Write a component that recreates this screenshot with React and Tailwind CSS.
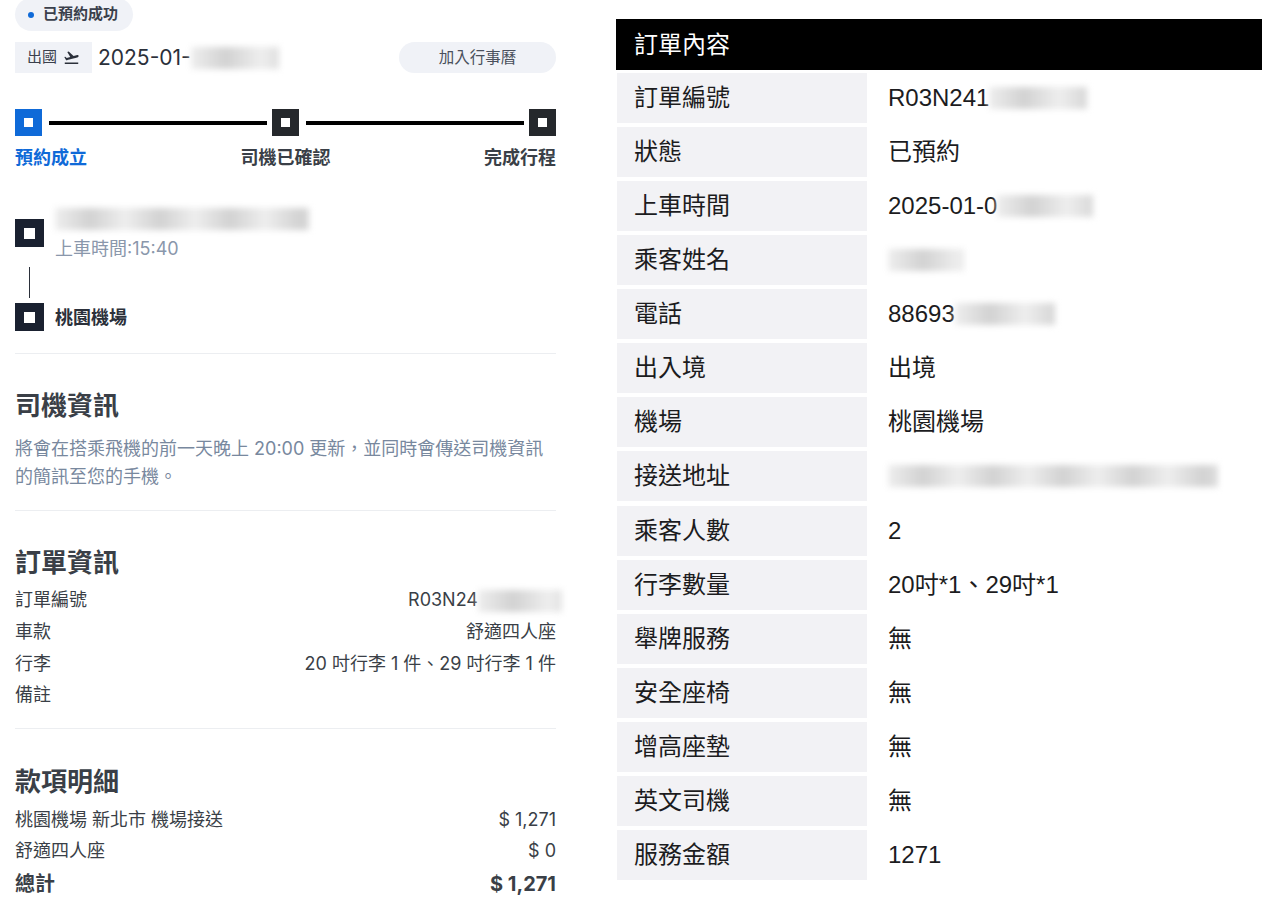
import React from 'react';
import { MdFlightTakeoff } from 'react-icons/md';

const leftFont = { fontFamily: 'Inter, "Noto Sans CJK TC", sans-serif' };
const rightFont = { fontFamily: '"Liberation Sans", "Noto Sans CJK TC", sans-serif' };

const orderRows = [
  ['訂單編號', 'R03N241', 98],
  ['狀態', '已預約'],
  ['上車時間', '2025-01-0', 96],
  ['乘客姓名', '', 76],
  ['電話', '88693', 100],
  ['出入境', '出境'],
  ['機場', '桃園機場'],
  ['接送地址', '', 330],
  ['乘客人數', '2'],
  ['行李數量', '20吋*1、29吋*1'],
  ['舉牌服務', '無'],
  ['安全座椅', '無'],
  ['增高座墊', '無'],
  ['英文司機', '無'],
  ['服務金額', '1271'],
];

// blurred out personal data
const Smudge = ({ width, className = '' }) => (
  <span
    className={`inline-block h-[22px] blur-[3px] align-middle bg-[repeating-linear-gradient(90deg,#eeeeee_0px,#d2d2d2_35px,#eeeeee_70px)] ${className}`}
    style={{ width }}
  />
);

const StepBox = ({ color }) => (
  <div className={`w-[27px] h-[27px] shrink-0 flex items-center justify-center ${color}`}>
    <div className="w-[9px] h-[9px] bg-white" />
  </div>
);

const RouteBox = () => (
  <div className="w-[29px] h-[28px] shrink-0 flex items-center justify-center bg-[#1a2130]">
    <div className="w-[11px] h-[11px] bg-white" />
  </div>
);

const Row = ({ label, children, className = 'h-[31.7px] text-[18px]' }) => (
  <div className={`flex items-center justify-between text-[#3a3f47] ${className}`}>
    <span>{label}</span>
    <span>{children}</span>
  </div>
);

const LeftColumn = () => (
  <div className="w-[541px] ml-[15px] shrink-0 -mt-[2px]" style={leftFont}>
    {/* Status pill */}
    <div className="w-[118px] h-[33px] rounded-full bg-[#f0f2f7] flex items-center pl-[13px] gap-[9px] text-[15px] font-semibold text-[#3a404c]">
      <span className="w-[6px] h-[6px] rounded-full bg-[#0f6ad8]" />
      <span className="whitespace-nowrap">已預約成功</span>
    </div>

    {/* Trip date */}
    <div className="flex items-center mt-[11px] h-[31px]">
      <div className="w-[77px] h-full bg-[#f0f2f7] flex items-center pl-[12px] gap-[6px] text-[15px] text-[#3a404c]">
        <span>出國</span>
        <MdFlightTakeoff className="w-[17px] h-[17px] text-[#2b303a]" />
      </div>
      <div className="ml-[6px] mt-px text-[21px] text-[#2b303a] flex items-center">
        <span>2025-01-</span>
        <Smudge width={88} />
      </div>
      <button className="ml-auto w-[157px] h-full rounded-full bg-[#f0f2f7] text-[15.5px] text-[#4a505c]">加入行事曆</button>
    </div>

    {/* Progress steps */}
    <div className="flex items-center mt-[36px]">
      <StepBox color="bg-[#0f6ad8]" />
      <div className="flex-1 h-[4px] bg-black ml-[7px] mr-[5px]" />
      <StepBox color="bg-[#25282c]" />
      <div className="flex-1 h-[4px] bg-black ml-[7px] mr-[5px]" />
      <StepBox color="bg-[#25282c]" />
    </div>
    <div className="flex justify-between mt-[9px] text-[18px] font-semibold leading-[26px] text-[#3a3f47]">
      <span className="text-[#0f6ad8]">預約成立</span>
      <span>司機已確認</span>
      <span>完成行程</span>
    </div>

    {/* Route */}
    <div className="mt-[37px] flex gap-[11px]">
      <div className="flex flex-col items-center mt-[11px]">
        <RouteBox />
        <div className="w-px h-[31px] bg-[#2b303a] mt-[20px]" />
        <div className="mt-[5px]"><RouteBox /></div>
      </div>
      <div>
        <div className="h-[22px] flex items-center"><Smudge width={254} /></div>
        <div className="mt-[7px] text-[18px] leading-[24px] text-[#8a97ab]">上車時間:15:40</div>
        <div className="mt-[45px] text-[18px] font-bold leading-[24px] text-[#2b303a]">桃園機場</div>
      </div>
    </div>

    <hr className="border-[#eceef1] mt-[22px]" />

    {/* Driver info */}
    <h2 className="mt-[35px] text-[26px] font-semibold leading-[34px] text-[#3a3f47]">司機資訊</h2>
    <p className="mt-[12px] text-[18px] leading-[28px] text-[#78889e]">
      將會在搭乘飛機的前一天晚上 20:00 更新，並同時會傳送司機資訊的簡訊至您的手機。
    </p>

    <hr className="border-[#eceef1] mt-[19px]" />

    {/* Order info */}
    <h2 className="mt-[35px] text-[26px] font-semibold leading-[34px] text-[#3a3f47]">訂單資訊</h2>
    <div className="mt-[4px]">
      <Row label="訂單編號">R03N24<Smudge width={84} className="-mr-[6px]" /></Row>
      <Row label="車款">舒適四人座</Row>
      <Row label="行李">20 吋行李 1 件、29 吋行李 1 件</Row>
      <Row label="備註" />
    </div>

    <hr className="border-[#eceef1] mt-[17px]" />

    {/* Payment */}
    <h2 className="mt-[36px] text-[26px] font-semibold leading-[34px] text-[#3a3f47]">款項明細</h2>
    <div className="mt-[5px]">
      <Row label="桃園機場 新北市 機場接送" className="h-[31px] text-[18px]">$ 1,271</Row>
      <Row label="舒適四人座" className="h-[31px] text-[18px]">$ 0</Row>
      <Row label="總計" className="h-[36px] text-[20px] font-bold">$ 1,271</Row>
    </div>
  </div>
);

const RightColumn = () => (
  <div className="w-[646px] ml-[60px] mt-[19px] shrink-0" style={rightFont}>
    <div className="h-[51px] bg-black text-white text-[24px] flex items-center pl-[18px]">訂單內容</div>
    <div className="flex flex-col gap-[4.07px] mt-[3px] ml-px">
      {orderRows.map(([label, value, smudge]) => (
        <div key={label} className="flex h-[50px] text-[24px] text-[#1c1c1e]">
          <div className="w-[250px] bg-[#f2f2f5] flex items-center pl-[17px]">{label}</div>
          <div className="flex items-center pl-[21px]">
            {value}
            {smudge ? <Smudge width={smudge} /> : null}
          </div>
        </div>
      ))}
    </div>
  </div>
);

export default function App() {
  return (
    <div className="w-[1280px] h-[910px] overflow-hidden bg-white flex items-start">
      <LeftColumn />
      <RightColumn />
    </div>
  );
}
